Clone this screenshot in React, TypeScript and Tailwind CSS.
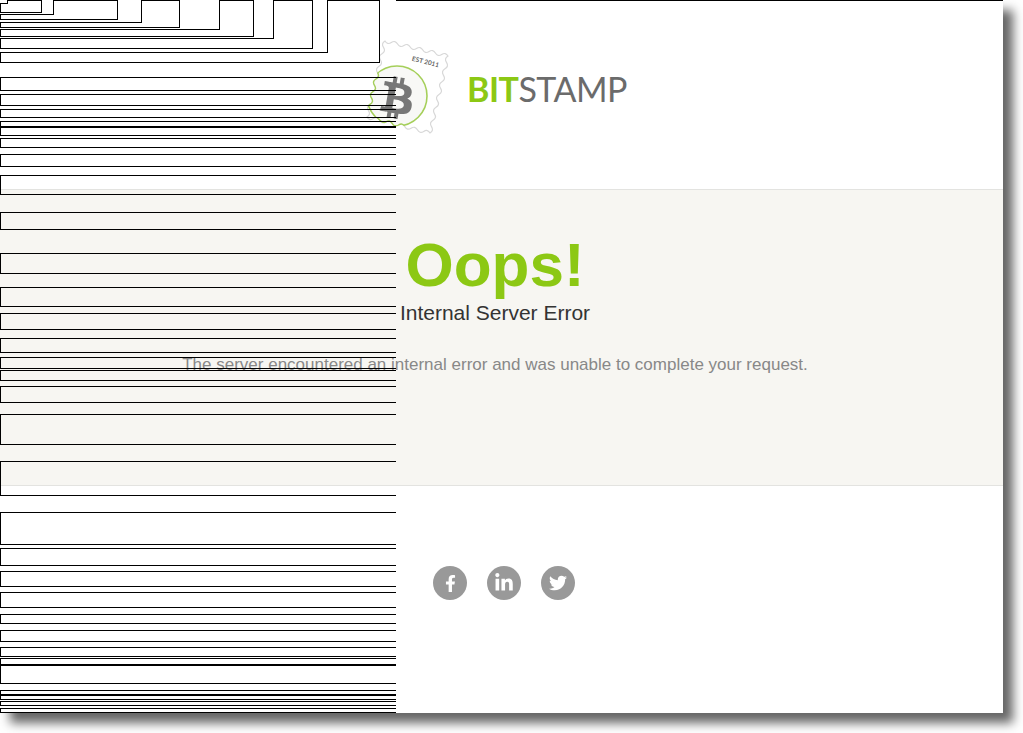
import React from 'react';
import { FaBtc, FaFacebookF, FaLinkedinIn, FaTwitter } from 'react-icons/fa';

// top line / bottom line of each box in the outline overlay
const rows: [number, number][] = [
  [77, 90], [94, 105], [109, 117], [121, 126], [127, 135], [138, 147], [154, 166], [175, 194], [212, 229],
  [253, 273], [287, 306], [313, 329], [338, 352], [357, 368], [370, 380], [386, 402], [414, 444], [461, 495],
  [512, 544], [548, 565], [571, 586], [592, 607], [614, 623], [630, 641], [647, 656], [658, 664], [665, 683],
  [690, 694], [695, 699], [701, 705], [708, 712],
];

// wrapped inline boxes at the top left: [prevX, nextX, y of the step, bottom y]
const stairs: [number, number, number, number][] = [
  [7, 41, 3, 12],
  [53, 117, 14, 19],
  [141, 179, 22, 27],
  [219, 253, 29, 36],
  [273, 312, 38, 48],
  [327, 379, 52, 62],
];

type Pt = [number, number];

function wavy(a: Pt, b: Pt, periods: number, amp: number) {
  const dx = (b[0] - a[0]) / (periods * 2);
  const dy = (b[1] - a[1]) / (periods * 2);
  const len = Math.hypot(dx, dy);
  const nx = (-dy / len) * amp;
  const ny = (dx / len) * amp;
  let d = '';
  for (let i = 0; i < periods * 2; i++) {
    const s = i % 2 === 0 ? 1 : -1;
    const cx = a[0] + dx * (i + 0.5) + nx * s * 2;
    const cy = a[1] + dy * (i + 0.5) + ny * s * 2;
    d += `Q${cx.toFixed(1)} ${cy.toFixed(1)} ${(a[0] + dx * (i + 1)).toFixed(1)} ${(a[1] + dy * (i + 1)).toFixed(1)}`;
  }
  return d;
}

const tl: Pt = [385, 41];
const tr: Pt = [448, 56];
const br: Pt = [430, 133];
const bl: Pt = [367, 117];
const stampPath = `M${tl[0]} ${tl[1]}${wavy(tl, tr, 5, 1.7)}${wavy(tr, br, 6, 1.7)}${wavy(br, bl, 5, 1.7)}${wavy(bl, tl, 6, 1.7)}Z`;

function Stamp() {
  return (
    <div className="relative w-[84px] h-[98px] shrink-0">
      <svg width="84" height="98" viewBox="366 39 84 98" className="block">
        <defs>
          <clipPath id="stamp-clip">
            <path d={stampPath} />
          </clipPath>
          <clipPath id="seal-clip">
            <circle cx="397" cy="96" r="30.5" />
          </clipPath>
        </defs>
        <path d={stampPath} fill="#ffffff" stroke="#d8d8d8" strokeWidth="1.2" />
        <g clipPath="url(#stamp-clip)">
          <circle cx="397" cy="96" r="30" fill="#f8f8f6" stroke="#a5cf5a" strokeWidth="1.6" />
        </g>
        <g clipPath="url(#seal-clip)">
          <path d={stampPath} fill="none" stroke="#a5cf5a" strokeWidth="1.4" />
        </g>
        <text
          x="425"
          y="64"
          textAnchor="middle"
          transform="rotate(14 425 64)"
          className="font-['Lato',sans-serif]"
          fontSize="6.5"
          fontWeight="700"
          fill="#666666"
        >
          EST 2011
        </text>
      </svg>
      <FaBtc className="absolute left-[15px] top-[38px] w-[33px] h-[42px] rotate-[10deg] text-[#777777]" />
    </div>
  );
}

function Stair({ data }: { data: [number, number, number, number] }) {
  const [prevX, nextX, stepY, bottomY] = data;
  return (
    <>
      <div
        className="absolute border-t border-l border-b border-black"
        style={{ left: 0, top: stepY, width: prevX + 1, height: bottomY - stepY + 1 }}
      />
      <div
        className="absolute border-t border-l border-r border-black"
        style={{ left: prevX, top: 0, width: nextX - prevX + 1, height: stepY + 1 }}
      />
      <div
        className="absolute border-r border-b border-black"
        style={{ left: prevX, top: stepY, width: nextX - prevX + 1, height: bottomY - stepY + 1 }}
      />
    </>
  );
}

function OutlineOverlay() {
  return (
    <div className="absolute left-0 top-0 w-[396px] h-[713px] overflow-hidden pointer-events-none">
      {stairs.map((s) => (
        <Stair key={s[1]} data={s} />
      ))}
      {rows.map(([top, bottom]) => (
        <div
          key={top}
          className="absolute left-0 w-[400px] border-t border-l border-b border-black"
          style={{ top, height: bottom - top + 1 }}
        />
      ))}
    </div>
  );
}

function SocialIcon({ children }: { children: React.ReactNode }) {
  return (
    <div className="w-[34px] h-[34px] rounded-full bg-[#999999] flex items-center justify-center text-white text-[18px]">
      {children}
    </div>
  );
}

export default function App() {
  return (
    <div className="w-[1023px] h-[733px] bg-white overflow-hidden font-['Liberation_Sans',Arial,sans-serif]">
      <div className="relative w-[1003px] h-[713px] bg-white shadow-[10px_10px_10px_#666666]">
        <header className="h-[189px] flex items-start pl-[366px] pt-[39px]">
          <Stamp />
          <div className="ml-[17px] mt-[28px] font-['Lato',sans-serif] text-[34px] leading-[44px] tracking-[-0.5px]">
            <span className="font-bold text-[#8cc814]">BIT</span>
            <span className="font-normal text-[#6b6b6b]">STAMP</span>
          </div>
        </header>

        <main className="h-[297px] bg-[#f7f6f2] border-t border-b border-[#e3e3e0] w-full">
          <div className="w-[990px] text-center pt-[39px]">
            <h1 className="text-[62px] leading-[72px] font-bold text-[#8cc814]">Oops!</h1>
            <h2 className="text-[21px] leading-[24px] text-[#333333]">Internal Server Error</h2>
            <p className="text-[17px] leading-[24px] text-[#888888] mt-[28px]">
              The server encountered an internal error and was unable to complete your request.
            </p>
          </div>
        </main>

        <footer className="flex gap-5 pl-[433px] pt-[80px]">
          <SocialIcon>
            <FaFacebookF className="w-[17px] h-[17px]" />
          </SocialIcon>
          <SocialIcon>
            <FaLinkedinIn className="w-[20px] h-[20px]" />
          </SocialIcon>
          <SocialIcon>
            <FaTwitter />
          </SocialIcon>
        </footer>

        <div className="absolute left-[396px] right-0 top-0 h-px bg-black" />
        <OutlineOverlay />
      </div>
    </div>
  );
}
